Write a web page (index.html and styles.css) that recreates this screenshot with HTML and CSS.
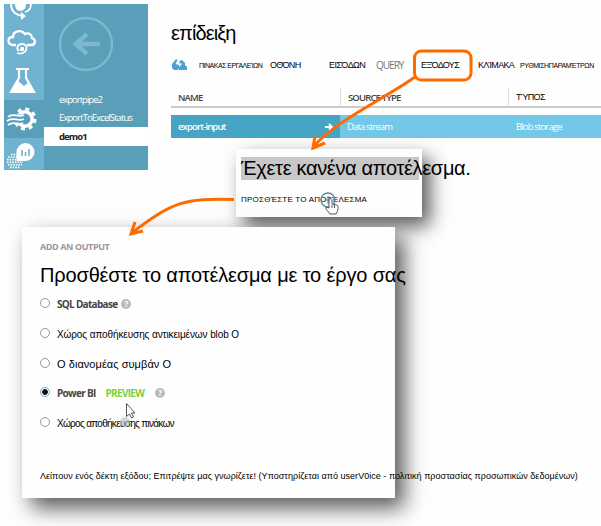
FILE: index.html
```html
<!DOCTYPE html>
<html lang="el">
<head>
<meta charset="utf-8">
<title>επίδειξη</title>
<link rel="stylesheet" href="styles.css">
</head>
<body>
<main class="page">
  <section class="portal">
    <div class="rail">
      <svg width="40" height="166" viewBox="4 4 40 166" fill="none" stroke="#fff">
        <path fill="#599fba" stroke="none" d="M4 100h40v38H4z"/>
        <path stroke-width="1.800" d="M11 4c0 7 5 11 12 12M31 4c0 4-2 7-6 8"/>
        <path fill="#fff" stroke="none" d="M15 4h11c0 5-3 7-6 7s-5-3-5-7zM21 12l5 4-5 4z"/>
        <path stroke-width="2.300" d="M16 45h-3c-6-1-6-8 0-8 0-6 8-8 12-3 4-2 7 1 7 4 4 1 4 7-1 7h-4"/>
        <path stroke-width="1.800" d="M17 53c10 3 13-9 5-9-5 0-6 5-3 7"/>
        <circle cx="22" cy="49" r="2.200" fill="#fff" stroke="none"/>
        <path stroke-width="2.200" d="M16 69h13M19 69v9l-8 14h23l-8-14v-9"/>
        <path fill="#fff" stroke="none" d="M18 81l6 5 4-3 6 10H11z"/>
        <circle cx="25" cy="119" r="7.200" stroke-width="3.600"/>
        <circle cx="25" cy="119" r="10" stroke-width="3" stroke-dasharray="3.900 3.950"/>
        <path stroke="#599fba" stroke-width="9" d="M7 121c6-6 9 1 16-3"/>
        <path stroke-width="1.700" d="M8 117c5-5 9 1 16-2M7 121c6-5 10 1 17-2M8 125c6-5 10 1 15-2"/>
        <g stroke-width="1.600" stroke-dasharray="1.600 1">
          <path d="M11 154.500h8M8 157h14M7 159.600h16M7 162.200h16M8 164.800h14M10 167.400h10"/>
        </g>
        <path fill="#fff" stroke="none" d="M16.500 161v-9a9 9 0 1 1 9 9z"/>
        <path stroke="#70b3d1" stroke-width="1.600" d="M22 150v6M25.500 152v4M29 149v7"/>
      </svg>
    </div>
    <nav class="nav">
      <svg class="back" width="54" height="56" viewBox="0 0 54 56" fill="none" stroke="#7db8cf">
        <circle cx="27" cy="28" r="26" stroke-width="2.400"/>
        <path stroke-width="4.500" d="M41 28H17M28 18L17 28l11 10"/>
      </svg>
      <a class="link"><span class="t-pipe">exportpipe2</span></a>
      <a class="link"><span class="t-excel">ExportToExcelStatus</span></a>
      <a class="link current"><span class="t-demo">demo1</span></a>
    </nav>
    <div class="content">
      <h1 class="title">επίδειξη</h1>
      <div class="tabs">
        <svg class="logo" width="16" height="12" viewBox="0 0 16 12"><path fill="#4aa2d2" d="M5 0L1 5v4l2 2h4l1-2V6L4.500 5 6.500 1zM8.500 2L11 1l3 3v2l2 2v3H8V8l3-3-1-1-1.500 1z"/></svg>
        <span class="tab dash">ΠΙΝΑΚΑΣ ΕΡΓΑΛΕΊΩΝ</span>
        <span class="tab monitor">ΟΘΌΝΗ</span>
        <span class="tab inputs">ΕΙΣΌΔΩΝ</span>
        <span class="tab query">QUERY</span>
        <span class="tab outputs">ΕΞΌΔΟΥΣ</span>
        <span class="tab scale">ΚΛΊΜΑΚΑ</span>
        <span class="tab config">ΡΥΘΜΙΣΗΠΑΡΑΜΈΤΡΩΝ</span>
      </div>
      <div class="row head">
        <span class="cell"><b class="t-name">NAME</b></span>
        <span class="cell"><b class="t-source">SOURCE TYPE</b></span>
        <span class="cell kind">ΤΎΠΟΣ</span>
      </div>
      <div class="row data">
        <span class="cell first"><span>export-input</span>
          <svg width="9" height="8" viewBox="0 0 9 8" fill="none" stroke="#fff" stroke-width="1.800"><path d="M0 4h7M4 1l3 3-3 3"/></svg></span>
        <span class="cell">Data stream</span>
        <span class="cell blob">Blob storage</span>
      </div>
    </div>
  </section>

  <section class="result">
    <h2 class="result-title"><span>Έχετε κανένα αποτέλεσμα.</span></h2>
    <p class="add">ΠΡΟΣΘΈΣΤΕ ΤΟ ΑΠΟΤΈΛΕΣΜΑ</p>
  </section>

  <section class="dialog">
    <p class="eyebrow">ADD AN OUTPUT</p>
    <h2 class="dialog-title">Προσθέστε το αποτέλεσμα με το έργο σας</h2>
    <label class="option"><i class="radio"></i><b>SQL Database</b><i class="help">?</i></label>
    <label class="option"><i class="radio"></i><span class="t-store">Χώρος αποθήκευσης αντικειμένων blob Ο</span></label>
    <label class="option"><i class="radio"></i><span class="t-hub">Ο διανομέας συμβάν Ο</span></label>
    <label class="option"><i class="radio on"></i><b>Power BI</b><b class="preview">PREVIEW</b><i class="help">?</i></label>
    <label class="option"><i class="radio"></i><span class="t-table">Χώρος αποθήκευσης πινάκων</span></label>
    <p class="foot">Λείπουν ενός δέκτη εξόδου; Επιτρέψτε μας γνωρίζετε! (Υποστηρίζεται από userV0ice - πολιτική προστασίας προσωπικών δεδομένων)</p>
  </section>

  <svg class="overlay" width="601" height="526" viewBox="0 0 601 526" fill="none">
    <g stroke="#ff6a00" stroke-width="3">
      <rect x="414.500" y="51" width="56.500" height="29" rx="7"/>
      <path d="M415 77C384 99 337 120 314 146M315 136l-2 12 12-5"/>
      <path d="M234 199.500C184 198 173 202 133 232M135 222l-4 12 12-3"/>
    </g>
    <circle cx="328" cy="200" r="7" stroke="#568ba5" stroke-width="1.300"/>
    <path d="M324 200h8M328 196v8" stroke="#568ba5"/>
    <path d="M329 199c1-1 3 0 3 1v4l5 1c2 1 1 6-1 9h-6c-2-3-5-5-4-7l3 1z" fill="#fff" stroke="#555"/>
    <path d="M332 205v3M334.500 205v3" stroke="#555"/>
    <circle cx="125" cy="422" r="5" fill="#bbb" opacity=".6"/>
    <path d="M126.500 403.500v13l3-2.500 2 4 2-1-2-4h3.500z" fill="#fff" stroke="#555"/>
  </svg>
</main>
</body>
</html>
```
FILE: styles.css
```css
* { box-sizing: border-box; }
body { margin: 0; background: #fff; font-family: "Open Sans", "Noto Sans", sans-serif; color: #000; }
h1, h2, p { margin: 0; font-weight: 400; }
i { font-style: normal; }
.page { position: relative; width: 601px; height: 526px; overflow: hidden; background: #fefefe; white-space: nowrap; }
.title, .tab, .row .kind, .result-title, .add, .dialog-title, .option span, .foot { font-family: "Liberation Sans", sans-serif; }

.portal { display: flex; height: 170px; padding: 4px 0 0 4px; }
.rail { width: 40px; height: 166px; background: #70b3d1; }
.rail svg { display: block; }
.nav { width: 104px; height: 166px; background: #599fba; color: #fff; font-size: 9.5px; }
.back { display: block; margin: 12px 0 18px 15px; }
.link { display: flex; align-items: center; height: 18.6px; padding-left: 15px; }
.link.current { background: #fff; color: #222; font-weight: 700; }
.t-pipe { letter-spacing: -1px; }
.t-excel { letter-spacing: -.9px; }
.t-demo { letter-spacing: -.9px; }

.content { width: 430px; margin-left: 23px; padding-top: 13px; }
.title { height: 35px; font-size: 20px; line-height: 32px; letter-spacing: -.9px; }
.tabs { display: flex; align-items: center; height: 26px; font-size: 9px; }
.logo { margin-right: 12px; }
.tab { flex: none; }
.dash { width: 71px; font-size: 7px; letter-spacing: -.5px; }
.monitor { width: 59px; letter-spacing: -.7px; }
.inputs { width: 47px; letter-spacing: -.6px; }
.tabs .query { width: 45px; color: #777; font-family: "Open Sans", sans-serif; font-size: 10px; letter-spacing: -1px; }
.outputs { width: 57px; letter-spacing: -.7px; }
.scale { width: 42px; letter-spacing: -.7px; }
.config { font-size: 7px; letter-spacing: -.4px; }

.row { display: grid; grid-template-columns: 169px 168px 93px; font-size: 9.5px; letter-spacing: -.85px; }
.cell { display: flex; align-items: center; padding-left: 7px; }
.head { height: 20px; margin-top: 10px; border-bottom: 2px solid #ccc; color: #444; }
.head b { font-weight: 600; }
.head .cell + .cell { border-left: 1px solid #ddd; }
.head .kind { color: #000; font-size: 9px; letter-spacing: -.7px; }
.data { height: 23px; margin-top: 7px; background: #72c8e6; color: #fff; }
.first { justify-content: space-between; padding-right: 6px; background: #46a5c5; font-weight: 600; }
.blob { padding-left: 8px; }

.result { position: relative; width: 186px; height: 68px; margin: -21px 0 0 236px; padding: 8px 0 0 5px; background: #fefefe; box-shadow: 8px 9px 18px rgba(0,0,0,.65); }
.result-title { width: 178px; height: 23px; background: #c8c8c8; font-size: 20px; line-height: 23px; letter-spacing: -.33px; }
.add { margin-top: 13px; font-size: 8px; line-height: 14px; letter-spacing: .23px; }

.dialog { position: relative; width: 373px; height: 271px; margin: 10px 0 0 22px; padding: 12px 0 0 18px; background: #fefefe; box-shadow: 9px 10px 20px rgba(0,0,0,.65); }
.eyebrow { height: 16px; color: #999; font-size: 9px; font-weight: 700; line-height: 16px; letter-spacing: -.4px; }
.dialog-title { height: 40px; margin-bottom: -6px; font-size: 20px; line-height: 40px; letter-spacing: -.16px; }
.option { display: flex; align-items: center; height: 29.7px; font-size: 10px; }
.option b { color: #444; font-weight: 700; letter-spacing: -.7px; }
.option span { padding-top: 1px; }
.t-store { letter-spacing: -.1px; }
.t-hub { font-size: 11px; letter-spacing: .05px; }
.t-table { letter-spacing: -.7px; }
.radio { width: 10px; height: 10px; margin: -1px 7px 0 0; border: 1px solid #999; border-radius: 50%; background: #fff; }
.radio.on { border-color: #6fa8c4; background: radial-gradient(circle, #111 0 2.5px, #fff 3.2px); }
.help { width: 10px; height: 10px; margin-left: 4px; border-radius: 50%; background: #bbb; color: #fff; font-size: 8px; font-weight: 700; line-height: 10px; text-align: center; }
.option .preview { margin: 0 7px 0 10px; color: #7fd13b; }
.foot { margin-top: 30px; font-size: 9px; line-height: 18px; letter-spacing: .03px; }
.overlay { position: absolute; left: 0; top: 0; }
```
